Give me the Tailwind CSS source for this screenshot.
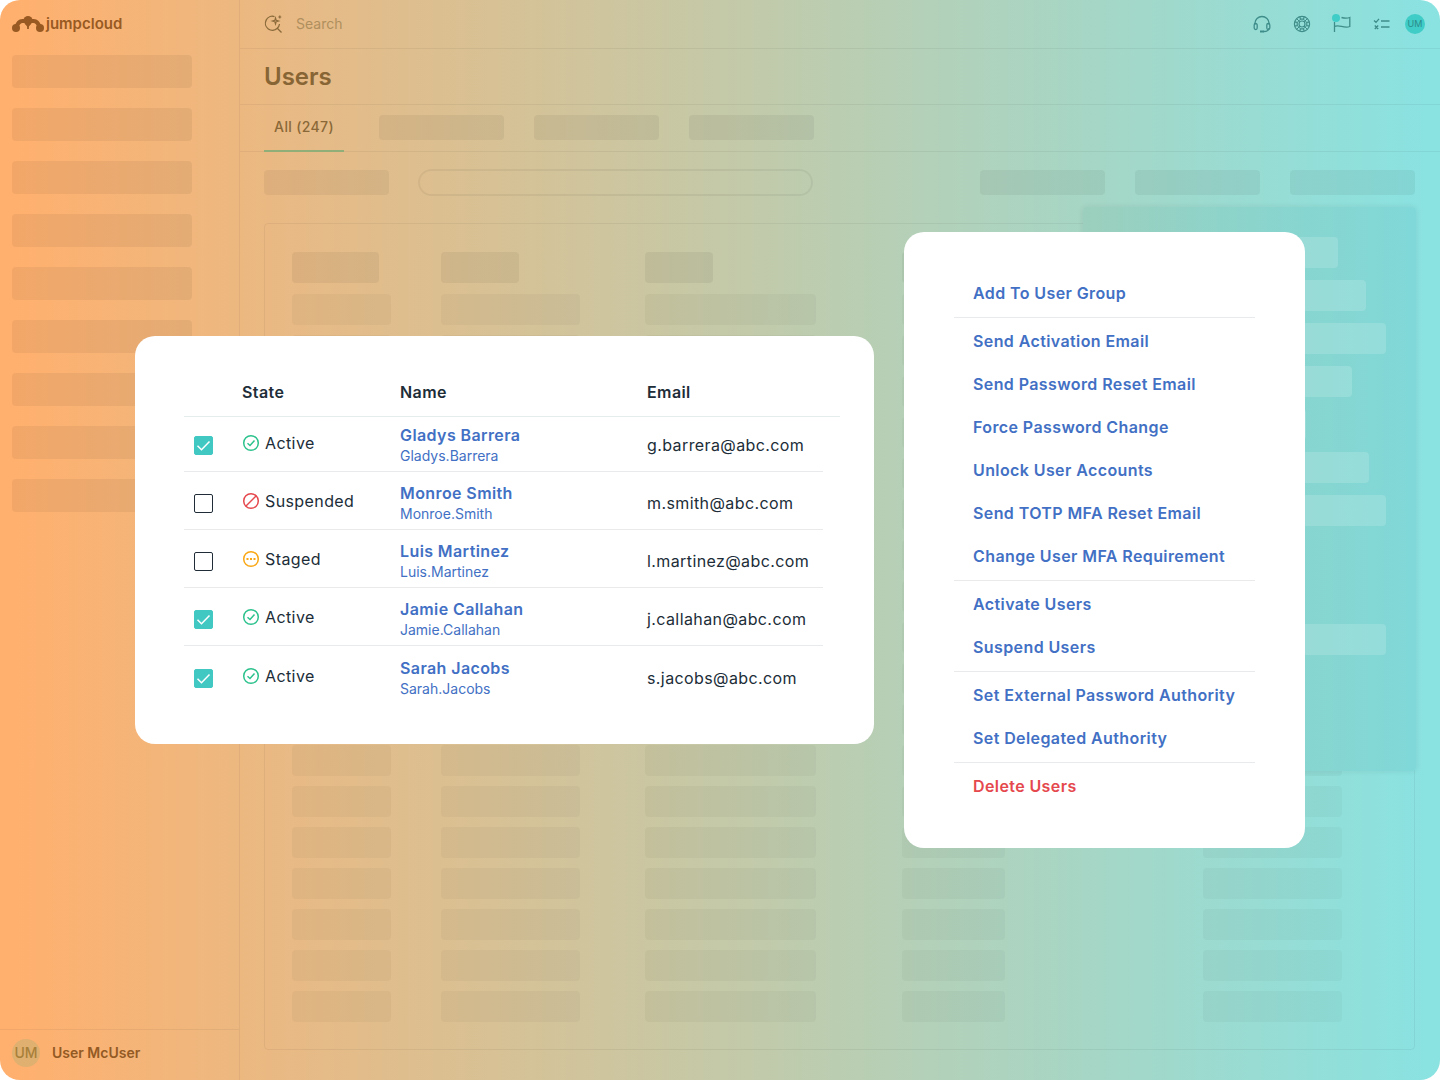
<!DOCTYPE html>
<html lang="en">
<head>
  <meta charset="UTF-8" />
  <meta name="viewport" content="width=device-width, initial-scale=1.0"/>
  <title>Users - JumpCloud</title>
  <script src="https://cdn.jsdelivr.net/npm/@tailwindcss/browser@4"></script>
</head>
<body class="bg-white font-['Inter','Liberation_Sans',sans-serif]">
  <div class="relative flex min-h-screen overflow-hidden rounded-[20px] bg-[linear-gradient(90deg,#ffb06e_1%,#8ae2e1_99%)]">

    <!-- Sidebar -->
    <aside class="flex w-60 shrink-0 flex-col border-r border-black/5">
      <a href="#" class="flex h-12 items-center gap-[2px] px-3 text-[#985a22]">
        <svg class="h-4 w-8" viewBox="0 0 32 16" fill="currentColor">
          <circle cx="4" cy="12" r="4"/>
          <circle cx="28" cy="12" r="4"/>
          <circle cx="16" cy="4.500" r="4.500"/>
          <path d="M4.500 11 C5.500 7.500 7.500 5.200 10.500 5 C13 4.800 14 4.500 16 4.500 C18 4.500 19 4.800 21.500 5 C24.500 5.200 26.500 7.500 27.500 11" fill="none" stroke="currentColor" stroke-width="4.200"/>
          <path d="M16 6 V13" stroke="currentColor" stroke-width="1.800"/>
          <path d="M13 8 H19 L16 11.500 Z"/>
        </svg>
        <span class="text-[15px] font-semibold">jumpcloud</span>
      </a>
      <div id="side-items" class="mt-[7px] flex flex-col gap-5 px-3"></div>
      <div class="mt-auto flex h-[51px] items-center gap-3 border-t border-black/5 px-3 pb-1">
        <span class="flex size-7 items-center justify-center rounded-full bg-[#e0b070] text-sm font-medium text-[#a8803a]">UM</span>
        <span class="text-sm font-semibold text-[#935a24]">User McUser</span>
      </div>
    </aside>

    <main class="flex min-w-0 flex-1 flex-col">
      <!-- Top bar -->
      <header class="flex h-[49px] items-center border-b border-black/5 pr-[15px] pl-6">
        <label for="search" class="text-[#8a6a3a]">
          <svg class="size-5" viewBox="0 0 20 20" fill="none" stroke="currentColor" stroke-width="1.300">
            <path d="M10.500 2.600 A7 7 0 1 0 13.300 14.300 A7 7 0 0 0 15.500 10 M13.300 14.300 L17.500 18.500"/>
            <path d="M11.500 4 L12.200 6.300 L14.500 7 L12.200 7.700 L11.500 10 L10.800 7.700 L8.500 7 L10.800 6.300 Z M15.800 1.500 V4.500 M14.300 3 H17.300" stroke-width="1.200"/>
          </svg>
        </label>
        <input id="search" type="text" placeholder="Search" class="ml-3 min-w-0 flex-1 bg-transparent text-sm outline-none placeholder:text-[#b08f5e]" />
        <div class="flex items-center gap-5 text-[#3f8d8a]">
          <button aria-label="Support">
            <svg class="size-5" viewBox="0 0 20 20" fill="none" stroke="currentColor" stroke-width="1.300">
              <path d="M3 10.500 V9 A7 6.500 0 0 1 17 9 V10.500 M17 14 C17 16.500 14.500 17.500 11.500 17.500"/>
              <rect x="2.200" y="9.500" width="3" height="6" rx="1.500"/>
              <rect x="14.800" y="9.500" width="3" height="6" rx="1.500"/>
              <path d="M8 17.500 H12" stroke-width="2"/>
            </svg>
          </button>
          <button aria-label="Help">
            <svg class="size-5" viewBox="0 0 20 20" fill="none" stroke="currentColor" stroke-width="1.200">
              <circle cx="10" cy="10" r="7.600"/>
              <circle cx="10" cy="10" r="3"/>
              <path d="M7.800 2.800 L8.500 5.200 H11.500 L12.200 2.800 M7.800 17.200 L8.500 14.800 H11.500 L12.200 17.200 M2.800 7.800 L5.200 8.500 V11.500 L2.800 12.200 M17.200 7.800 L14.800 8.500 V11.500 L17.200 12.200"/>
              <path d="M8.500 5.200 L5.200 8.500 M11.500 5.200 L14.800 8.500 M8.500 14.800 L5.200 11.500 M11.500 14.800 L14.800 11.500 M4.800 4.800 L7.800 7.800 M15.200 4.800 L12.200 7.800 M4.800 15.200 L7.800 12.200 M15.200 15.200 L12.200 12.200" stroke-width="1"/>
            </svg>
          </button>
          <button aria-label="Announcements" class="relative">
            <svg class="size-5" viewBox="0 0 20 20" fill="none" stroke="currentColor" stroke-width="1.300">
              <path d="M2.500 8 V18 M2.500 12.500 C7 10 12 15 17.800 12.500 V3.500 C15 4.700 12 4.200 9.500 3.500"/>
            </svg>
            <span class="absolute top-0 left-0 size-2 rounded-full bg-[#40cdc7]"></span>
          </button>
          <button aria-label="Tasks">
            <svg class="size-5" viewBox="0 0 20 20" fill="none" stroke="currentColor" stroke-width="1.300">
              <path d="M2 6.500 L4 8.300 L7 4.800 M2.800 11.500 L6.200 15 M6.200 11.500 L2.800 15 M9 7 H17.500 M9 13 H17.500"/>
            </svg>
          </button>
        </div>
        <button class="ml-[13px] flex size-5 items-center justify-center rounded-full bg-[#40cdc7] text-[9px] text-[#2b8b89]">UM</button>
      </header>

      <div class="flex h-14 items-center border-b border-black/5 px-6">
        <h1 class="text-2xl font-semibold text-[#876535]">Users</h1>
      </div>

      <!-- Tabs -->
      <div class="flex h-[47px] items-center border-b border-black/5 pl-6">
        <button class="-mb-px h-[47px] w-20 border-b-2 border-[#8fae78] pb-[2px] text-sm font-medium tracking-wide whitespace-nowrap text-[#8a6837]">All (247)</button>
        <div class="mb-px ml-[35px] flex gap-[30px]">
          <div class="h-[25px] w-[125px] rounded bg-black/5"></div>
          <div class="h-[25px] w-[125px] rounded bg-black/5"></div>
          <div class="h-[25px] w-[125px] rounded bg-black/5"></div>
        </div>
      </div>

      <!-- Toolbar -->
      <div class="mt-[17px] flex items-center pr-[25px] pl-6">
        <div class="h-[25px] w-[125px] rounded bg-black/5"></div>
        <div class="ml-[29px] h-[27px] w-[395px] rounded-full border-2 border-black/5"></div>
        <div class="ml-auto flex gap-[30px]">
          <div class="h-[25px] w-[125px] rounded bg-black/5"></div>
          <div class="h-[25px] w-[125px] rounded bg-black/5"></div>
          <div class="h-[25px] w-[125px] rounded bg-black/5"></div>
        </div>
      </div>

      <div id="grid" class="mt-[27px] mr-[25px] mb-[30px] ml-6 flex flex-1 flex-col gap-[10px] rounded border border-black/5 px-[27px] pt-7"></div>
    </main>

    <!-- Ghost of the actions menu -->
    <div id="ghost-menu" class="absolute top-[207px] right-[24px] flex h-[564px] w-[333px] flex-col gap-3 rounded bg-linear-to-r from-[#9ccfbd] via-[#8bd4cc] to-[#80d8d8] py-[30px] pl-[60px] shadow-[0_0_6px_rgba(0,0,0,0.08)]"></div>

    <!-- Selected users -->
    <section class="absolute top-[336px] left-[135px] h-[408px] w-[739px] rounded-[20px] bg-white pt-8 pr-[34px] pl-[49px] text-[#202d38]">
      <table class="w-full table-fixed border-separate border-spacing-0 text-left">
        <thead>
          <tr class="h-[49px] text-base tracking-wide *:border-b *:border-[#e4ecec]">
            <th class="w-[58px]"></th>
            <th class="w-[158px] font-semibold">State</th>
            <th class="w-[247px] font-semibold">Name</th>
            <th class="w-[176px] font-semibold">Email</th>
            <th></th>
          </tr>
        </thead>
        <tbody id="users"></tbody>
      </table>
    </section>

    <!-- Bulk actions -->
    <nav class="absolute top-[232px] left-[904px] h-[616px] w-[401px] rounded-[20px] bg-white px-[50px] pt-10 text-base font-semibold tracking-wide whitespace-nowrap text-[#4270c4]">
      <ul class="border-b border-[#e8eaec] px-[19px] pb-[2px] leading-[43px]">
        <li><a href="#">Add To User Group</a></li>
      </ul>
      <ul class="border-b border-[#e8eaec] px-[19px] py-[2px] leading-[43px]">
        <li><a href="#">Send Activation Email</a></li>
        <li><a href="#">Send Password Reset Email</a></li>
        <li><a href="#">Force Password Change</a></li>
        <li><a href="#">Unlock User Accounts</a></li>
        <li><a href="#">Send TOTP MFA Reset Email</a></li>
        <li><a href="#">Change User MFA Requirement</a></li>
      </ul>
      <ul class="border-b border-[#e8eaec] px-[19px] py-[2px] leading-[43px]">
        <li><a href="#">Activate Users</a></li>
        <li><a href="#">Suspend Users</a></li>
      </ul>
      <ul class="border-b border-[#e8eaec] px-[19px] py-[2px] leading-[43px]">
        <li><a href="#">Set External Password Authority</a></li>
        <li><a href="#">Set Delegated Authority</a></li>
      </ul>
      <ul class="px-[19px] py-[2px] leading-[43px] text-[#e5484d]">
        <li><a href="#">Delete Users</a></li>
      </ul>
    </nav>
  </div>

  <script>
    const users = [
      { name: "Gladys Barrera", login: "Gladys.Barrera", email: "g.barrera@abc.com", state: "Active", checked: true },
      { name: "Monroe Smith", login: "Monroe.Smith", email: "m.smith@abc.com", state: "Suspended", checked: false },
      { name: "Luis Martinez", login: "Luis.Martinez", email: "l.martinez@abc.com", state: "Staged", checked: false },
      { name: "Jamie Callahan", login: "Jamie.Callahan", email: "j.callahan@abc.com", state: "Active", checked: true },
      { name: "Sarah Jacobs", login: "Sarah.Jacobs", email: "s.jacobs@abc.com", state: "Active", checked: true },
    ];

    const icons = {
      Active: `<svg class="size-[18px] text-[#2cc28d]" viewBox="0 0 18 18" fill="none" stroke="currentColor" stroke-width="1.500"><circle cx="9" cy="9" r="7.300"/><path d="M5.500 9.300 L8 11.500 L12.500 6.500"/></svg>`,
      Suspended: `<svg class="size-[18px] text-[#e5484d]" viewBox="0 0 18 18" fill="none" stroke="currentColor" stroke-width="1.500"><circle cx="9" cy="9" r="7.300"/><path d="M4 14 L14 4"/></svg>`,
      Staged: `<svg class="size-[18px] text-[#f9a714]" viewBox="0 0 18 18" fill="none" stroke="currentColor" stroke-width="1.500"><circle cx="9" cy="9" r="7.300"/><path d="M4.500 9 H6.500 M8 9 H10 M11.500 9 H13.500" stroke-width="2"/></svg>`,
    };

    document.getElementById("users").innerHTML = users.map(u => `
      <tr class="h-[58px] align-bottom first:h-[55px] *:border-b *:border-[#e8eaec] last:*:border-b-0">
        <td class="pb-4 pl-[10px]">
          <span class="relative block size-[19px]">
            <input type="checkbox" aria-label="Select ${u.name}" ${u.checked ? "checked" : ""} class="peer block size-[19px] appearance-none rounded-[2px] border border-[#202d38] checked:border-[#41c8c3] checked:bg-[#41c8c3]">
            <svg class="pointer-events-none absolute inset-0 hidden size-[19px] peer-checked:block" viewBox="0 0 19 19" fill="none" stroke="white" stroke-width="1.500"><path d="M3.500 9.800 L7.500 13.800 L15.500 5.500"/></svg>
          </span>
        </td>
        <td class="pb-4"><span class="flex items-center gap-[5px] text-base tracking-wide">${icons[u.state]}${u.state}</span></td>
        <td class="pb-[5px] text-[#4270c4]">
          <a href="#" class="block text-base leading-[21px] font-semibold tracking-wide">${u.name}</a>
          <span class="block text-sm leading-5">${u.login}</span>
        </td>
        <td class="pb-[14px] text-base tracking-wide">${u.email}</td>
      </tr>`).join("");

    document.getElementById("side-items").innerHTML =
      `<div class="h-[33px] w-[180px] rounded bg-black/5"></div>`.repeat(9);

    const head = `
      <div class="mb-px flex">
        <div class="w-[149px]"><div class="h-[31px] w-[87px] rounded bg-black/5"></div></div>
        <div class="w-[204px]"><div class="h-[31px] w-[78px] rounded bg-black/5"></div></div>
        <div class="w-[257px]"><div class="h-[31px] w-[68px] rounded bg-black/5"></div></div>
        <div class="h-[31px] w-[87px] rounded bg-black/5"></div>
      </div>`;
    const row = `
      <div class="flex">
        <div class="w-[149px]"><div class="h-[31px] w-[99px] rounded bg-black/3"></div></div>
        <div class="w-[204px]"><div class="h-[31px] w-[139px] rounded bg-black/3"></div></div>
        <div class="w-[257px]"><div class="h-[31px] w-[171px] rounded bg-black/3"></div></div>
        <div class="h-[31px] w-[103px] rounded bg-black/3"></div>
        <div class="mr-[45px] ml-auto h-[31px] w-[139px] rounded bg-black/3"></div>
      </div>`;
    document.getElementById("grid").innerHTML = head + row.repeat(18);

    document.getElementById("ghost-menu").innerHTML = `
      <div class="h-[31px] w-[195px] rounded bg-white/15"></div>
      <div class="h-[31px] w-[223px] rounded bg-white/15"></div>
      <div class="h-[31px] w-[243px] rounded bg-white/15"></div>
      <div class="h-[31px] w-[209px] rounded bg-white/15"></div>
      <div class="h-[31px] w-[163px] rounded bg-white/15"></div>
      <div class="h-[31px] w-[226px] rounded bg-white/15"></div>
      <div class="h-[31px] w-[243px] rounded bg-white/15"></div>
      <div class="mt-[86px] h-[31px] w-[243px] rounded bg-white/15"></div>`;
  </script>
</body>
</html>
